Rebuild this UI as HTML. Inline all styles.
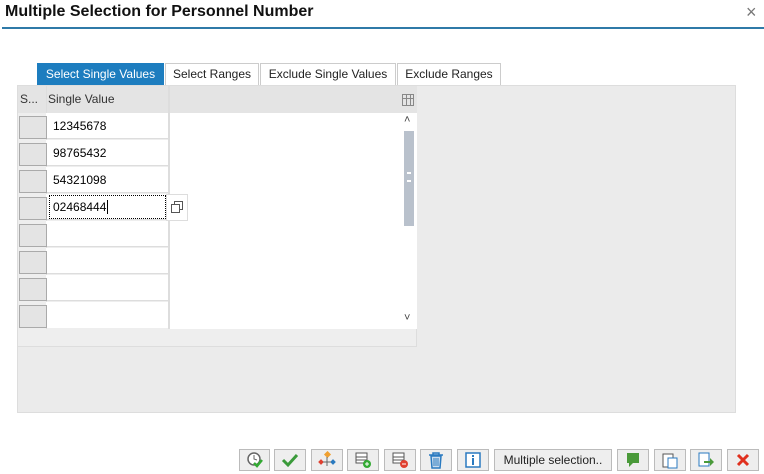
<!DOCTYPE html><html><head><style>
body{margin:0;width:764px;height:474px;background:#fff;font-family:"Liberation Sans",Arial,sans-serif;position:relative;overflow:hidden;font-size:12px;color:#000}
.a{position:absolute}
.tab{position:absolute;top:63px;height:21px;border:1px solid #ccc;border-bottom:none;background:#fff;line-height:21px;text-align:center;font-size:12px;color:#222}
.sel{width:26px;height:21px;background:#e4e4e4;border:1px solid #aaa;left:19px}
.row{left:46px;width:122px;height:26px;border-bottom:1px solid #ddd;background:#fff;line-height:26px;padding-left:7px;box-sizing:border-box;font-size:12px}
.btn{position:absolute;top:449px;height:22px;background:#eee;border:1px solid #bbb;box-sizing:border-box;display:flex;align-items:center;justify-content:center}
</style></head><body>
<div class="a" style="left:5px;top:3px;font-size:16px;font-weight:bold;color:#111">Multiple Selection for Personnel Number</div>
<div class="a" style="left:746px;top:2px;font-size:18px;color:#777">×</div>
<div class="a" style="left:2px;top:27px;width:762px;height:2px;background:#2f7aa8"></div>
<div class="tab" style="left:37px;width:125px;background:#1d7dbf;color:#fff;border-color:#1d7dbf">Select Single Values</div>
<div class="tab" style="left:165px;width:92px">Select Ranges</div>
<div class="tab" style="left:260px;width:134px">Exclude Single Values</div>
<div class="tab" style="left:397px;width:102px">Exclude Ranges</div>
<div class="a" style="left:17px;top:85px;width:719px;height:328px;background:#ebebeb;border:1px solid #ddd;box-sizing:border-box"></div>
<div class="a" style="left:18px;top:86px;width:399px;height:261px;background:#eee;border-right:1px solid #ddd;border-bottom:1px solid #ddd;box-sizing:border-box"></div>
<div class="a" style="left:18px;top:86px;width:399px;height:27px;background:#e4e4e4"></div>
<div class="a" style="left:20px;top:92px;color:#333">S...</div>
<div class="a" style="left:46px;top:86px;width:1px;height:243px;background:#ddd"></div>
<div class="a" style="left:48px;top:92px;color:#333">Single Value</div>
<div class="a" style="left:168px;top:86px;width:2px;height:243px;background:#ddd"></div>
<div class="a" style="left:170px;top:113px;width:230px;height:216px;background:#fff"></div>
<svg class="a" style="left:401px;top:93px" width="14" height="14"><rect x="1.5" y="1.5" width="11" height="11" fill="none" stroke="#888"/><path d="M1 5.5H13M5.5 2V13M9.5 2V13" stroke="#888"/></svg>
<div class="a" style="left:400px;top:113px;width:17px;height:216px;background:#fff"></div>
<div class="a" style="left:404px;top:131px;width:10px;height:95px;background:#b9c1cc"></div>
<div class="a" style="left:407px;top:172px;width:4px;height:10px;border-top:2px solid #fff;border-bottom:2px solid #fff;box-sizing:border-box"></div>
<div class="a" style="left:404px;top:114px;font-size:11px;color:#444">&#x2C4;</div>
<div class="a" style="left:404px;top:312px;font-size:11px;color:#444">&#x2C5;</div>
<div class="a row" style="top:113px">12345678</div><div class="a sel" style="top:116px"></div>
<div class="a row" style="top:140px">98765432</div><div class="a sel" style="top:143px"></div>
<div class="a row" style="top:167px">54321098</div><div class="a sel" style="top:170px"></div>
<div class="a row" style="top:194px"></div><div class="a sel" style="top:197px"></div>
<div class="a" style="left:49px;top:195px;width:117px;height:24px;border:1px dotted #000;box-sizing:border-box;line-height:22px;padding-left:3px;background:#fff">02468444<span style="border-left:1px solid #000;margin-left:1px"></span></div>
<div class="a" style="left:166px;top:194px;width:22px;height:27px;background:#fff;border:1px solid #ddd;box-sizing:border-box"></div>
<svg class="a" style="left:169px;top:199px" width="16" height="16"><rect x="2.5" y="5.5" width="8" height="8" fill="none" stroke="#555"/><path d="M5.5 5V2.5H13.5V10.5H11" fill="none" stroke="#555"/></svg>
<div class="a row" style="top:221px"></div><div class="a sel" style="top:224px"></div>
<div class="a row" style="top:248px"></div><div class="a sel" style="top:251px"></div>
<div class="a row" style="top:275px"></div><div class="a sel" style="top:278px"></div>
<div class="a row" style="top:302px;border-bottom:none"></div><div class="a sel" style="top:305px"></div>
<div class="btn" style="left:239px;width:31px"><svg width="18" height="18"><circle cx="8" cy="8" r="6" fill="#fff" stroke="#666" stroke-width="1.5"/><path d="M8 4V8L11 9" stroke="#666" fill="none"/><path d="M8 12l3 3 5-6" stroke="#3a3" stroke-width="2.5" fill="none"/></svg></div>
<div class="btn" style="left:274px;width:32px"><svg width="18" height="16"><path d="M2 8l5 5L16 3" stroke="#3a9a3a" stroke-width="3" fill="none"/></svg></div>
<div class="btn" style="left:311px;width:32px"><svg width="18" height="18"><rect x="7" y="1" width="5" height="5" fill="#f0a030" transform="rotate(45 9.5 3.5)"/><rect x="1" y="9" width="4" height="4" fill="#e04030" transform="rotate(45 3 11)"/><rect x="13" y="9" width="4" height="4" fill="#2a7ac0" transform="rotate(45 15 11)"/><path d="M9 6V15M5 11H13" stroke="#666"/></svg></div>
<div class="btn" style="left:347px;width:32px"><svg width="18" height="18"><path d="M2 2H13V12H2ZM2 6H13M2 9H13" stroke="#555" fill="#fff"/><circle cx="13" cy="13" r="4" fill="#3a3"/><path d="M11 13H15M13 11V15" stroke="#fff"/></svg></div>
<div class="btn" style="left:384px;width:32px"><svg width="18" height="18"><path d="M2 2H13V12H2ZM2 6H13M2 9H13" stroke="#555" fill="#fff"/><circle cx="13" cy="13" r="4" fill="#e04030"/><path d="M11 13H15" stroke="#fff"/></svg></div>
<div class="btn" style="left:420px;width:32px"><svg width="18" height="18"><path d="M2 4H16M6 4V2H12V4M4 5L5 17H13L14 5Z" stroke="#2a7ac0" stroke-width="1.5" fill="#cde"/><path d="M7 7V15M9 7V15M11 7V15" stroke="#2a7ac0"/></svg></div>
<div class="btn" style="left:457px;width:32px"><svg width="18" height="18"><rect x="2" y="2" width="14" height="14" fill="#fff" stroke="#2a7ac0" stroke-width="1.5"/><rect x="8" y="4" width="2" height="2" fill="#2a7ac0"/><rect x="8" y="7" width="2" height="7" fill="#2a7ac0"/></svg></div>
<div class="btn" style="left:494px;width:118px;font-size:12px;color:#222">Multiple selection..</div>
<div class="btn" style="left:617px;width:32px"><svg width="18" height="18"><path d="M3 2H15V12H9L5 16V12H3Z" fill="#4a9a3a"/></svg></div>
<div class="btn" style="left:654px;width:32px"><svg width="18" height="18"><rect x="2" y="3" width="10" height="13" fill="#fff" stroke="#555"/><rect x="7" y="7" width="9" height="10" fill="#fff" stroke="#2a7ac0"/></svg></div>
<div class="btn" style="left:690px;width:32px"><svg width="18" height="18"><rect x="2" y="2" width="10" height="13" fill="#fff" stroke="#2a7ac0"/><path d="M7 10H13V7L17 11L13 15V12H7Z" fill="#4a9a3a"/></svg></div>
<div class="btn" style="left:727px;width:32px"><svg width="16" height="16"><path d="M3 3L13 13M13 3L3 13" stroke="#e0301e" stroke-width="3"/></svg></div>
</body></html>
